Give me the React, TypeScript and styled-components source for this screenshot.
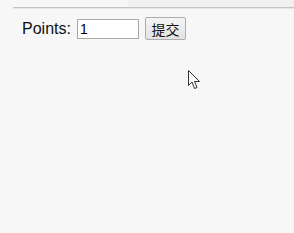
import styled, { createGlobalStyle } from "styled-components";

const Global = createGlobalStyle`
  html, body {
    margin: 0;
    padding: 0;
    background: #f7f7f7;
    font-family: "Liberation Sans", Arial, sans-serif;
  }
`;

const Page = styled.div`
  position: relative;
  width: 294px;
  height: 233px;
  overflow: hidden;
`;

const TopBand = styled.div`
  display: flex;
  height: 7px;
`;

const BandPart = styled.div<{ $tone: string }>`
  flex: ${(p) => (p.$tone === "left" ? "0 0 128px" : "1")};
  background: ${(p) => (p.$tone === "left" ? "#f7f7f7" : "#f1f1f1")};
`;

const Rule = styled.div`
  margin-left: 13px;
  height: 1px;
  background: #c3c3c3;
  border-bottom: 1px solid #e6e6e6;
`;

const Form = styled.form`
  display: flex;
  align-items: center;
  gap: 6px;
  padding: 8px 0 0 22px;
`;

const Label = styled.label`
  font-size: 16px;
  color: #111;
`;

const Input = styled.input`
  box-sizing: border-box;
  width: 62px;
  height: 20px;
  margin: 1px 0 0;
  padding: 1px 2px;
  border: 1px solid #a9a9a9;
  background: #fff;
  font-family: "Liberation Sans", Arial, sans-serif;
  font-size: 14px;
  color: #000;
  outline: none;
`;

const Button = styled.button`
  box-sizing: border-box;
  width: 41px;
  height: 23px;
  padding: 0;
  border: 1px solid #adadad;
  border-radius: 2px;
  background: linear-gradient(#f4f4f4, #e2e2e2);
  font-family: "Noto Sans CJK SC", sans-serif;
  font-size: 14px;
  color: #111;
`;

const Cursor = styled.svg`
  position: absolute;
  left: 188px;
  top: 70px;
`;

export default function App() {
  return (
    <Page>
      <Global />
      <TopBand>
        <BandPart $tone="left" />
        <BandPart $tone="right" />
      </TopBand>
      <Rule />
      <Form onSubmit={(e) => e.preventDefault()}>
        <Label>Points:</Label>
        <Input defaultValue="1" />
        <Button type="submit">提交</Button>
      </Form>
      <Cursor width="13" height="20" viewBox="0 0 13 20">
        <path
          d="M0.5 0.5 L0.5 15.5 L4 12 L6.5 18.5 L9 17.5 L6.5 11.5 L11.5 11.5 Z"
          fill="#fff"
          stroke="#333"
          strokeWidth="1"
          strokeLinejoin="round"
        />
      </Cursor>
    </Page>
  );
}
